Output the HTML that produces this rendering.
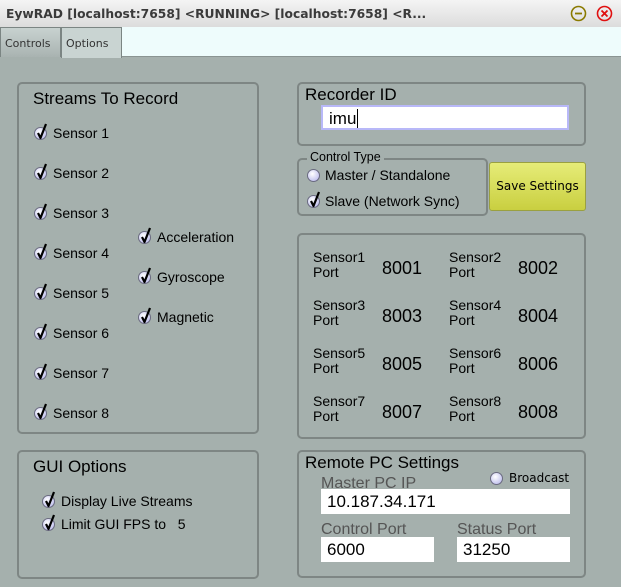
<!DOCTYPE html>
<html><head><meta charset="utf-8"><style>
*{margin:0;padding:0;box-sizing:border-box}
body{width:621px;height:587px;overflow:hidden;background:#a5b0ad;font-family:"Liberation Sans",sans-serif;position:relative;color:#000}
.a{position:absolute}
#title{left:0;top:0;width:621px;height:27px;background:linear-gradient(#f4f4f4,#dcdcdc);font-family:"DejaVu Sans",sans-serif;font-weight:bold;font-size:12.3px;color:#3a3a3a;padding:7px 0 0 6px}
#strip{left:0;top:27px;width:621px;height:30px;background:#eefcfc;border-bottom:1px solid #8a9492}
.tab{top:27px;height:30px;font-family:"DejaVu Sans",sans-serif;font-size:11px;color:#333;padding:9px 0 0 4px;border:1px solid #7b8583;border-bottom:none}
.box{border:2px solid #7e8684;border-radius:5px}
.h{font-size:17px}
.cb{font-size:14px;height:16px;line-height:16px;padding-left:19px}
.cb i{position:absolute;left:0;top:2px;width:13px;height:13px;border-radius:50%;background:radial-gradient(circle at 40% 35%,#fff,#c8c8f0 70%,#9c9cc8);border:1px solid #6a6a80}
.cb svg{position:absolute;left:1px;top:-3px}
.lbl{font-size:14px;line-height:15px}
.num{font-size:18px}
.inp{background:#fff;font-size:17px;padding:3px 0 0 6px}
.g{color:#555;font-size:16px}
</style></head><body>
<div id="title" class="a">EywRAD [localhost:7658] &lt;RUNNING&gt; [localhost:7658] &lt;R...</div>
<svg class="a" style="left:570px;top:5px" width="17" height="17"><circle cx="8.5" cy="8.5" r="7" fill="none" stroke="#8a7a00" stroke-width="1.6"/><line x1="5" y1="8.5" x2="12" y2="8.5" stroke="#8a7a00" stroke-width="1.8"/></svg>
<svg class="a" style="left:596px;top:5px" width="17" height="17"><circle cx="8.5" cy="8.5" r="7" fill="none" stroke="#e01010" stroke-width="1.6"/><path d="M5.5 5.5L11.5 11.5M11.5 5.5L5.5 11.5" stroke="#e01010" stroke-width="1.8"/></svg>
<div id="strip" class="a"></div>
<div class="a tab" style="left:0;width:61px;background:linear-gradient(#c8d2d0,#a9b3b1)">Controls</div>
<div class="a tab" style="left:61px;width:61px;background:#c9d4d2;height:31px">Options</div>

<div class="a box" style="left:17px;top:82px;width:242px;height:352px"></div>
<div class="a h" style="left:33px;top:89px">Streams To Record</div>
<div class="a cb" style="left:34px;top:125px"><i></i>Sensor 1</div>
<div class="a cb" style="left:34px;top:165px"><i></i>Sensor 2</div>
<div class="a cb" style="left:34px;top:205px"><i></i>Sensor 3</div>
<div class="a cb" style="left:34px;top:245px"><i></i>Sensor 4</div>
<div class="a cb" style="left:34px;top:285px"><i></i>Sensor 5</div>
<div class="a cb" style="left:34px;top:325px"><i></i>Sensor 6</div>
<div class="a cb" style="left:34px;top:365px"><i></i>Sensor 7</div>
<div class="a cb" style="left:34px;top:405px"><i></i>Sensor 8</div>
<div class="a cb" style="left:138px;top:229px"><i></i>Acceleration</div>
<div class="a cb" style="left:138px;top:269px"><i></i>Gyroscope</div>
<div class="a cb" style="left:138px;top:309px"><i></i>Magnetic</div>

<div class="a box" style="left:17px;top:450px;width:242px;height:129px"></div>
<div class="a h" style="left:33px;top:457px">GUI Options</div>
<div class="a cb" style="left:42px;top:493px"><i></i>Display Live Streams</div>
<div class="a cb" style="left:42px;top:516px"><i></i>Limit GUI FPS to &nbsp;&nbsp;5</div>

<div class="a box" style="left:297px;top:82px;width:289px;height:64px"></div>
<div class="a h" style="left:305px;top:85px">Recorder ID</div>
<div class="a inp" style="left:321px;top:105px;width:248px;height:25px;border:2px solid #b8b8f8;padding-top:2px">imu<span style="border-left:1px solid #000;margin-left:1px"></span></div>

<div class="a" style="left:297px;top:158px;width:191px;height:58px;border:2px solid #7e8684;border-radius:5px"></div>
<div class="a" style="left:307px;top:150px;font-size:12.5px;background:#a5b0ad;padding:0 3px">Control Type</div>
<div class="a cb" style="left:307px;top:167px"><i></i><span style="margin-left:-1px">Master / Standalone</span></div>
<div class="a cb" style="left:307px;top:193px"><i></i><span style="margin-left:-1px">Slave (Network Sync)</span></div>
<div class="a" style="left:489px;top:162px;width:97px;height:49px;background:linear-gradient(#e6ec78,#c9cf40);border:1px solid #9aa040;border-radius:3px;font-family:'DejaVu Sans',sans-serif;font-size:12px;text-align:center;line-height:47px">Save Settings</div>

<div class="a box" style="left:297px;top:233px;width:289px;height:206px"></div>
<div class="a lbl" style="left:313px;top:250px">Sensor1<br>Port</div><div class="a num" style="left:382px;top:258px">8001</div>
<div class="a lbl" style="left:449px;top:250px">Sensor2<br>Port</div><div class="a num" style="left:518px;top:258px">8002</div>
<div class="a lbl" style="left:313px;top:298px">Sensor3<br>Port</div><div class="a num" style="left:382px;top:306px">8003</div>
<div class="a lbl" style="left:449px;top:298px">Sensor4<br>Port</div><div class="a num" style="left:518px;top:306px">8004</div>
<div class="a lbl" style="left:313px;top:346px">Sensor5<br>Port</div><div class="a num" style="left:382px;top:354px">8005</div>
<div class="a lbl" style="left:449px;top:346px">Sensor6<br>Port</div><div class="a num" style="left:518px;top:354px">8006</div>
<div class="a lbl" style="left:313px;top:394px">Sensor7<br>Port</div><div class="a num" style="left:382px;top:402px">8007</div>
<div class="a lbl" style="left:449px;top:394px">Sensor8<br>Port</div><div class="a num" style="left:518px;top:402px">8008</div>

<div class="a box" style="left:297px;top:450px;width:289px;height:128px"></div>
<div class="a h" style="left:305px;top:453px">Remote PC Settings</div>
<div class="a cb" style="left:490px;top:470px;font-family:'DejaVu Sans',sans-serif;font-size:12px"><i></i>Broadcast</div>
<div class="a g" style="left:321px;top:475px">Master PC IP</div>
<div class="a inp" style="left:321px;top:489px;width:249px;height:25px">10.187.34.171</div>
<div class="a g" style="left:321px;top:521px">Control Port</div>
<div class="a g" style="left:457px;top:521px">Status Port</div>
<div class="a inp" style="left:321px;top:537px;width:113px;height:25px">6000</div>
<div class="a inp" style="left:457px;top:537px;width:113px;height:25px">31250</div>

<script>
document.querySelectorAll('.cb').forEach(function(e){
 var i=e.querySelector('i');
 if(e.textContent.indexOf('Master')>=0||e.textContent.indexOf('Broadcast')>=0)return;
 i.insertAdjacentHTML('afterend','<svg width="14" height="18" viewBox="0 0 14 18"><path d="M3 11 L5.5 16 L11 2" fill="none" stroke="#000" stroke-width="2.2" stroke-linejoin="round"/></svg>');
});
</script>
</body></html>
